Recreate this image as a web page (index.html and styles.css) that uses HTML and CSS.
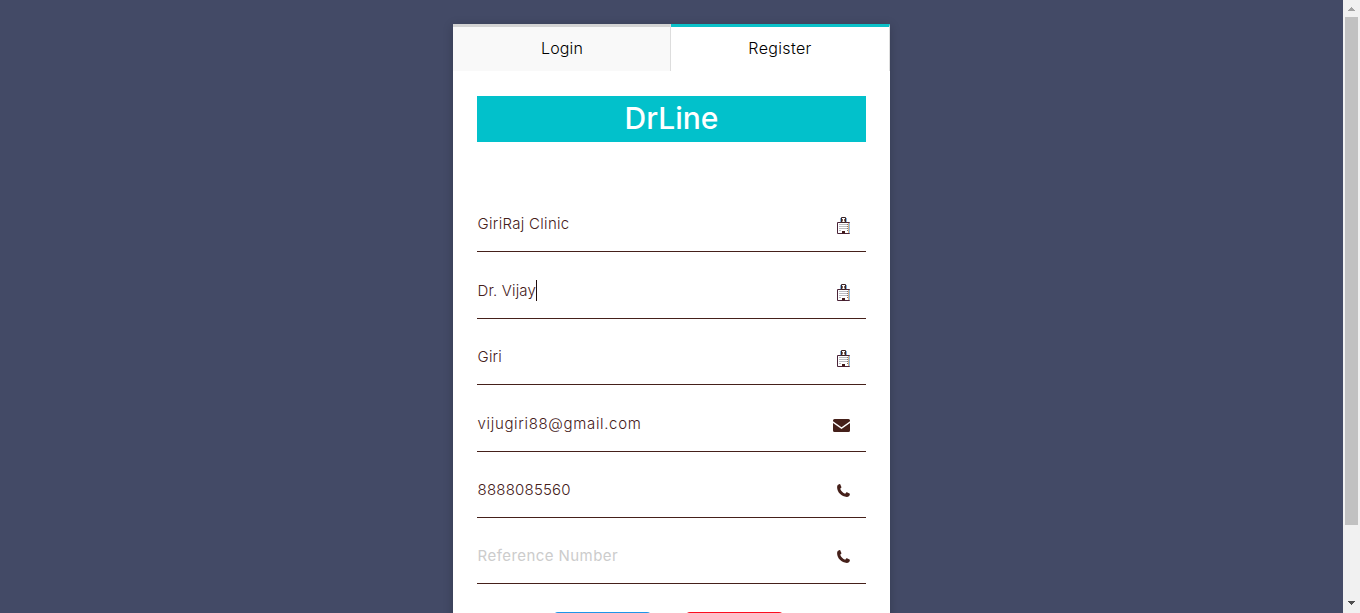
FILE: index.html
```
<!DOCTYPE html>
<html lang="en">
<head>
<meta charset="utf-8">
<title>DrLine</title>
<link rel="stylesheet" href="styles.css">
</head>
<body>
<svg class="sprites" width="0" height="0">
  <symbol id="hospital" viewBox="0 0 13 17">
    <path d="M.5 5.500h12v11H.5z" fill="#fff" stroke="#4a2438"/>
    <path d="M4.500.5h4v5h-4z" fill="#fff" stroke="#392225"/>
    <path d="M3.500 1v4M9.500 1v4" stroke="#7eb0dc"/>
    <path d="M5.500 2v2.500M7.500 2v2.500" stroke="#806050" fill="none"/>
    <path d="M2.500 7.500h1M4.500 7.500h1M6.500 7.500h1M8.500 7.500h1M10 7.500h1M2.500 9.500h1M4.500 9.500h1M6.500 9.500h1M8.500 9.500h1M10 9.500h1M2.500 11.500h1M4.500 11.500h1M6.500 11.500h1M8.500 11.500h1M10 11.500h1M2.500 13.500h1M10 13.500h1" stroke="#777984"/>
    <path d="M5 16.500v-2.500h3v2.500z" fill="#401818"/>
    <path d="M12.500 6v10" stroke="#8ebfe8"/>
    <path d="M11.500 6v10" stroke="#d09a64" stroke-width=".8"/>
  </symbol>
  <symbol id="mail" viewBox="0 0 17 13">
    <path d="M1.500 0h14A1.500 1.500 0 0 1 17 1.500v.8L8.500 8.200 0 2.300v-.8A1.500 1.500 0 0 1 1.500 0z"/>
    <path d="M0 4l8.500 5.900L17 4v7.500a1.500 1.500 0 0 1-1.500 1.500h-14A1.500 1.500 0 0 1 0 11.500z"/>
  </symbol>
  <symbol id="phone" viewBox="0 0 13 13">
    <path d="M2.700.1c.3-.1.500 0 .6.300l1.100 2.500c.1.300 0 .6-.2.800L3.200 4.700c.9 2.300 2.700 4.100 5 5l1-1.200c.2-.3.500-.3.800-.2l2.500 1.200c.3.100.5.400.4.700-.3 1.700-1.500 2.700-3 2.700C4.500 12.500.100 8.300.1 3.300.1 1.600 1 .4 2.700.1z"/>
  </symbol>
</svg>
<div class="page">
  <main class="card">
    <nav class="tabs">
      <a class="tab"><span class="t-login">Login</span></a>
      <a class="tab active"><span class="t-register">Register</span></a>
    </nav>
    <div class="content">
      <h1 class="brand"><span>DrLine</span></h1>
      <form class="fields">
        <div class="field"><span class="value v-clinic">GiriRaj Clinic</span><svg class="hospital"><use href="#hospital"/></svg></div>
        <div class="field"><span class="value v-first">Dr. Vijay</span><i class="caret"></i><svg class="hospital"><use href="#hospital"/></svg></div>
        <div class="field"><span class="value v-last">Giri</span><svg class="hospital"><use href="#hospital"/></svg></div>
        <div class="field"><span class="value v-mail">vijugiri88@gmail.com</span><svg class="mail"><use href="#mail"/></svg></div>
        <div class="field"><span class="value v-phone">8888085560</span><svg class="phone"><use href="#phone"/></svg></div>
        <div class="field"><span class="value placeholder">Reference Number</span><svg class="phone"><use href="#phone"/></svg></div>
      </form>
      <div class="actions"><div class="button blue"></div><div class="button red"></div></div>
    </div>
  </main>
</div>
<aside class="scrollbar">
  <svg class="arrow" viewBox="0 0 7 4"><path d="M3 0h1v1h1v1h1v1h1v1H0V3h1V2h1V1h1z" fill="#a3a3a3"/></svg>
  <div class="thumb"></div>
  <svg class="arrow down" viewBox="0 0 7 4"><path d="M0 0h7v1H6v1H5v1H4v1H3V3H2V2H1V1H0z" fill="#505050"/></svg>
</aside>
</body>
</html>
```
FILE: styles.css
```
* { box-sizing: border-box; }
body {
  margin: 0;
  height: 613px;
  display: flex;
  overflow: hidden;
  background: #434a66;
  font-family: Inter, "Open Sans", sans-serif;
  font-weight: 300;
  color: #45201a;
}
.sprites { position: absolute; }
.page { flex: 1; height: 613px; overflow: hidden; padding-top: 24px; }
.card {
  width: 437px;
  height: 700px;
  margin-left: 453px;
  background: #fff;
  box-shadow: 0 2px 10px rgba(0, 0, 0, .2);
}
.tabs { display: flex; height: 47px; }
.tab {
  width: 218px;
  padding-left: 1px;
  border-top: 3px solid #d4d4d4;
  border-right: 1px solid #ddd;
  background: #f9f9f9;
  color: #000;
  font-size: 16px;
  font-weight: 350;
  line-height: 43px;
  text-align: center;
}
.t-login { letter-spacing: .1px; }
.t-register { letter-spacing: .35px; }
.tab.active { width: 219px; padding: 0; border-top-color: #0bc1c8; background: #fff; }
.content { padding: 25px 24px 0; }
.brand {
  margin: 0;
  height: 46px;
  background: #02c1cb;
  color: #fff;
  font-size: 30px;
  font-weight: 500;
  line-height: 45px;
  text-align: center;
}
.fields { padding-top: 44px; }
.field {
  display: flex;
  align-items: center;
  height: 66.4px;
  padding: 10px 16px 0 .6px;
  border-bottom: 1px solid #45201a;
  font-size: 15px;
  white-space: nowrap;
}
.v-clinic { letter-spacing: .3px; }
.v-first { letter-spacing: .13px; }
.v-last { letter-spacing: .15px; }
.v-mail { letter-spacing: .66px; padding-top: 1px; }
.v-phone { letter-spacing: .2px; }
.field svg { flex: none; margin-left: auto; fill: #45201a; }
.hospital { width: 13px; height: 17px; margin-top: 4px; }
.mail { width: 17px; height: 13px; margin-top: 5px; }
.phone { width: 13px; height: 13px; margin-top: 2.4px; }
.caret { width: 1px; height: 21px; background: #200c0c; }
.placeholder { color: #ccc; font-weight: 400; letter-spacing: .44px; }
.actions { display: flex; gap: 33px; padding: 27.6px 0 0 76px; }
.button { width: 99px; height: 40px; border-radius: 5px; }
.blue { background: #1e95e8; }
.red { background: #fb0d20; }
.scrollbar {
  width: 17px;
  display: flex;
  flex-direction: column;
  align-items: center;
  background: #f1f1f1;
}
.arrow { width: 7px; height: 4px; margin: 7px 0 6px; shape-rendering: crispEdges; }
.thumb { width: 13px; height: 508px; background: #c1c1c1; }
.arrow.down { margin: auto 0 8px; }
```
